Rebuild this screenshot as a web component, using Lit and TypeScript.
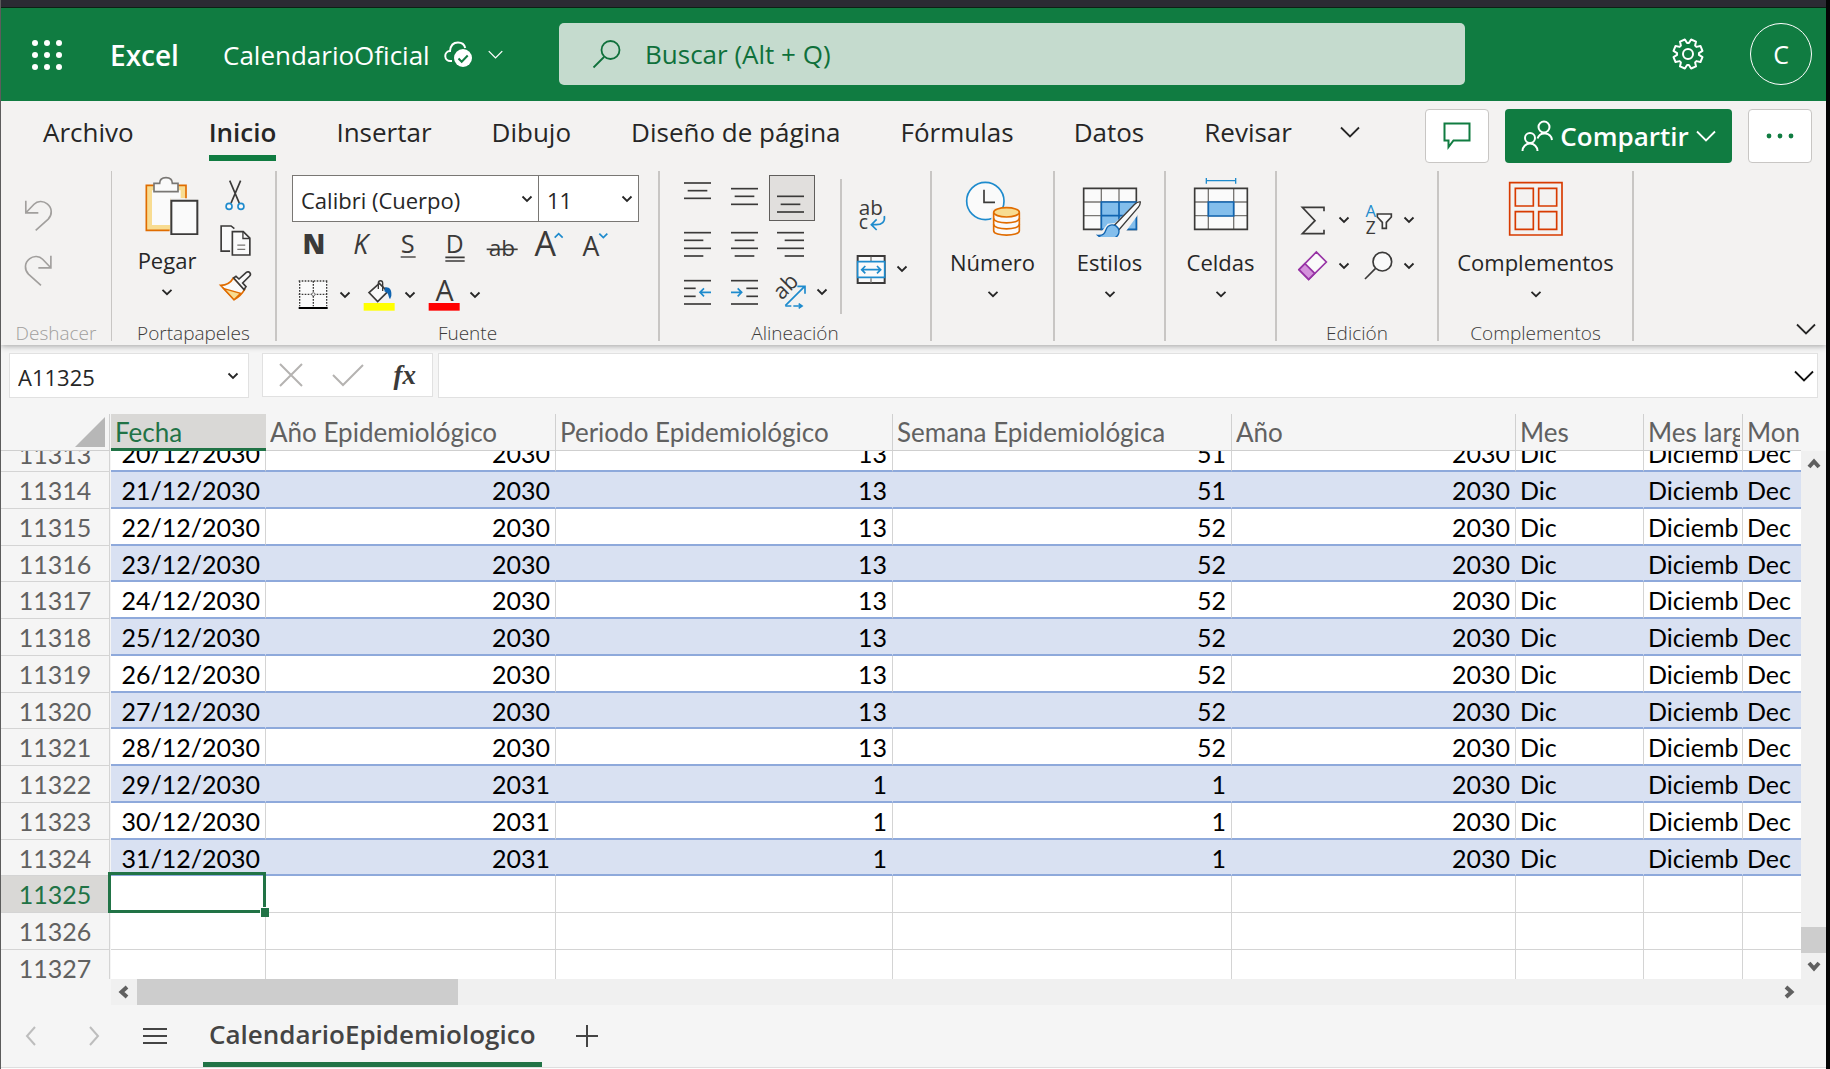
import { LitElement, html, css, svg, nothing } from "lit";
import { customElement, state } from "lit/decorators.js";
import { classMap } from "lit/directives/class-map.js";

const INK = "#3b3a39";
const BLUE = "#1e8bcd";
const PAPER = "#fafafa";

const icon = (box: string, w: number, h: number, body: unknown) =>
  html`<svg class="icon" viewBox=${box} width=${w} height=${h} aria-hidden="true">${body}</svg>`;

const smallChevron = icon("0 0 12 8", 12, 8, svg`<path d="M1.5 1.5 6 6l4.500-4.500" fill="none" stroke="#262626" stroke-width="1.800"/>`);
const bigChevron = (color: string, w = 20) =>
  icon("0 0 20 12", w, (w * 12) / 20, svg`<path d="M1 1.500 10 10.500 19 1.500" fill="none" stroke=${color} stroke-width="1.800"/>`);

const lines = (rows: Array<[number, number, number]>) =>
  svg`${rows.map(([x1, x2, y]) => svg`<path d="M${x1} ${y}H${x2}" stroke=${INK} stroke-width="5"/>`)}`;

/* ---- header ---- */
const waffle = icon("0 0 30 30", 30, 30, svg`${[3, 15, 27].map((y) => [3, 15, 27].map((x) => svg`<circle cx=${x} cy=${y} r="3" fill="#fff"/>`))}`);
const cloudSaved = icon("442 40 32 30", 32, 30, svg`
  <path d="M451 61h-1.500a5 5 0 0 1-.500-10c.500-5.500 3.700-8.500 8-8.500 4 0 6.500 2.300 7.200 5.500" fill="none" stroke="#fff" stroke-width="2"/>
  <circle cx="462" cy="58" r="9" fill="#fff"/>
  <path d="M457.500 58.500l3.200 3.200 6-6.200" fill="none" stroke="#107c41" stroke-width="2"/>`);
const lens = icon("0 0 30 30", 30, 30, svg`
  <circle cx="18.500" cy="11" r="9" fill="none" stroke="#0f703b" stroke-width="1.800"/>
  <path d="M12 18 1.500 28.500" stroke="#0f703b" stroke-width="1.800"/>`);
const gear = icon("-16 -16 32 32", 32, 32, svg`
  <path d=${gearPath()} fill="none" stroke="#fff" stroke-width="2" stroke-linejoin="round"/>
  <circle r="5" fill="none" stroke="#fff" stroke-width="2"/>`);
function gearPath() {
  const pts: string[] = [];
  const teeth = 8;
  for (let i = 0; i < teeth; i++) {
    const base = (i / teeth) * Math.PI * 2 + Math.PI / teeth;
    for (const [da, r] of [[-0.31, 11], [-0.18, 14.8], [0.18, 14.8], [0.31, 11]] as const) {
      const a = base + da;
      pts.push(`${(Math.cos(a) * r).toFixed(2)} ${(Math.sin(a) * r).toFixed(2)}`);
    }
  }
  return `M${pts.join("L")}Z`;
}
const commentIcon = icon("0 0 28 28", 28, 28, svg`<path d="M1.500 1.500h25v17H10.500l-5 6.500v-6.500h-4z" fill="none" stroke="#107c41" stroke-width="2"/>`);
const peopleIcon = icon("0 0 32 32", 32, 32, svg`<g fill="none" stroke="#fff" stroke-width="2">
  <circle cx="9" cy="18" r="5"/><path d="M1.500 31a7.500 7.500 0 0 1 15 0"/>
  <circle cx="23" cy="7" r="5.500"/><path d="M16.500 18.500a7.500 7.500 0 0 1 14.500 1.500"/></g>`);
const moreIcon = icon("0 0 28 6", 28, 6, svg`${[3, 14, 25].map((x) => svg`<circle cx=${x} cy="3" r="2.400" fill="#107c41"/>`)}`);

/* ---- ribbon: undo, clipboard ---- */
const undoIcon = icon("72 100 90 100", 30, 33, svg`<path d="M77 105v37h38M78 141l24-25c10-10 27-12 40-1 15 12 16 32 3 46l-38 34" fill="none" stroke="#a19f9d" stroke-width="5"/>`);
const redoIcon = icon("72 262 90 100", 30, 33, svg`<path d="M153 267v37h-38M152 303l-24-25c-10-10-27-12-40-1-15 12-16 32-3 46l38 34" fill="none" stroke="#a19f9d" stroke-width="5"/>`);
const pasteIcon = icon("402 30 198 180", 66, 60, svg`
  <path d="M439 61h118v38h-46v96h-72z" fill="#f8dc91"/>
  <path d="M456 76h86v24h-32v80h-54z" fill="#fafafa"/>
  <path d="M558 100V61H439v135h70" fill="none" stroke="#e06c00" stroke-width="5"/>
  <path d="M462 80V55h17c0-10 7-17 19-17s19 7 19 17h17v25z" fill="#fafafa" stroke="#797774" stroke-width="5"/>
  <path d="M514 107h78v101h-78z" fill="#fafafa" stroke=${INK} stroke-width="6"/>`);
const cutIcon = icon("658 40 96 100", 32, 33, svg`
  <path d="M690 45l29 68M723 45l-29 68" stroke=${INK} stroke-width="5"/>
  <circle cx="688" cy="123" r="9" fill="#fafafa" stroke=${BLUE} stroke-width="5"/>
  <circle cx="724" cy="123" r="9" fill="#fafafa" stroke=${BLUE} stroke-width="5"/>`);
const copyIcon = icon("654 176 105 100", 35, 33, svg`
  <path d="M690 258h-27v-76h30l10 8" fill="#fafafa" stroke=${INK} stroke-width="5"/>
  <path d="M697 199h33l20 20v51h-53z" fill="#fafafa" stroke=${INK} stroke-width="5"/>
  <path d="M729 199v21h21" fill="none" stroke=${INK} stroke-width="4"/>
  <path d="M712 240h24M712 253h24" stroke="#797774" stroke-width="4"/>`);
const painterIcon = icon("654 316 102 96", 34, 32, svg`
  <path d="M662 362c16 0 30-8 38-22l34 34c-8 14-18 24-32 31z" fill="#fafafa" stroke="#e06c00" stroke-width="5"/>
  <path d="M672 372l50 14-20 19z" fill="#f8dc91" stroke="#e06c00" stroke-width="4"/>
  <path d="M701 340l7-5 9 8 22-20c4-3 9-1 11 2s1 7-1 9l-21 21 10 11-6 9z" fill="#fafafa" stroke=${INK} stroke-width="5"/>`);

/* ---- ribbon: font ---- */
const glyph = (cx: number, body: unknown) => icon(`${cx - 60} 183 120 120`, 40, 40, body);
const boldIcon = glyph(131, svg`<text class="g" x="131" y="267" font-size="82" font-weight="800" text-anchor="middle">N</text>`);
const italicIcon = glyph(273, svg`<text class="g" x="272" y="267" font-size="80" font-style="italic" text-anchor="middle">K</text>`);
const underIcon = glyph(412, svg`<text class="g" x="411" y="265" font-size="76" text-anchor="middle">S</text><path d="M390 276h45" stroke=${INK} stroke-width="4"/>`);
const doubleIcon = glyph(554, svg`<text class="g" x="553" y="265" font-size="74" text-anchor="middle">D</text><path d="M525 277h58M525 288h58" stroke=${INK} stroke-width="5"/>`);
const strikeIcon = glyph(691, svg`<text class="g" x="691" y="272" font-size="68" text-anchor="middle">ab</text><path d="M645 253h93" stroke=${INK} stroke-width="5"/>`);
const growIcon = glyph(835, svg`<text class="g" x="824" y="272" font-size="102" text-anchor="middle">A</text><path d="M852 218l12-12 12 12" fill="none" stroke=${BLUE} stroke-width="5"/>`);
const shrinkIcon = glyph(980, svg`<text class="g" x="965" y="272" font-size="80" text-anchor="middle">A</text><path d="M990 206l12 12 12-12" fill="none" stroke=${BLUE} stroke-width="5"/>`);
const borderIcon = icon("70 330 120 120", 40, 40, svg`
  <path d="M87 346h87v80H87z" fill="#fafafa"/>
  <path d="M87 348h87M90 348v76M171 348v76M131 348v76M87 388h87" fill="none" stroke=${INK} stroke-width="4" stroke-dasharray="5 4"/>
  <circle cx="131" cy="388" r="5" fill="#fafafa" stroke=${INK} stroke-width="2"/>
  <path d="M87 429h87" stroke="#000" stroke-width="6"/>`);
const fillIcon = icon("265 330 120 120", 40, 40, svg`
  <path d="M298 383l31-28 25 25-30 30z" fill="#fafafa" stroke=${INK} stroke-width="5"/>
  <path d="M326 372v-18c0-9 13-9 13 0v24" fill="none" stroke=${INK} stroke-width="4"/>
  <path d="M346 367c14-2 21 8 19 26l-4 10c-5-8-4-14-8-19l-9-5z" fill="#1064b0"/>
  <path d="M282 414h93v23h-93z" fill="#ff0"/>`);
const colorIcon = icon("460 330 120 120", 40, 40, svg`
  <text class="g" x="525" y="408" font-size="86" text-anchor="middle">A</text>
  <path d="M477 414h93v23h-93z" fill="#f00"/>`);

/* ---- ribbon: alignment ---- */
const al = (x: number, y: number, body: unknown) => icon(`${x} ${y} 138 138`, 46, 46, body);
const topIcon = al(45, 30, lines([[72, 153, 54], [83, 142, 77], [72, 153, 100]]));
const midIcon = al(186, 30, lines([[213, 294, 71], [224, 283, 94], [213, 294, 118]]));
const botIcon = al(327, 30, lines([[351, 432, 94], [362, 421, 118], [351, 432, 141]]));
const leftIcon = al(45, 171, lines([[72, 153, 203], [72, 130, 226], [72, 153, 250], [72, 130, 273]]));
const centerIcon = al(186, 171, lines([[213, 294, 203], [224, 283, 226], [213, 294, 250], [224, 283, 273]]));
const rightIcon = al(327, 171, lines([[351, 432, 203], [374, 432, 226], [351, 432, 250], [374, 432, 273]]));
const outdentIcon = al(45, 312, svg`${lines([[72, 153, 347], [72, 107, 370], [72, 107, 394], [72, 153, 417]])}
  <path d="M153 382h-33M132 370l-12 12 12 12" fill="none" stroke=${BLUE} stroke-width="5"/>`);
const indentIcon = al(186, 312, svg`${lines([[213, 294, 347], [259, 294, 370], [259, 294, 394], [213, 294, 417]])}
  <path d="M213 382h32M233 370l12 12-12 12" fill="none" stroke=${BLUE} stroke-width="5"/>`);
const orientIcon = al(329, 312, svg`
  <text class="g" x="0" y="0" font-size="66" transform="translate(367 407) rotate(-45)">ab</text>
  <path d="M378 422l58-58M414 364h23v22" fill="none" stroke=${BLUE} stroke-width="5"/>
  <path d="M378 423h18M402 423h26M418 416l10 7-10 7" fill="none" stroke=${BLUE} stroke-width="5"/>`);
const wrapIcon = icon("572 84 138 138", 46, 46, svg`
  <text class="g" x="604" y="150" font-size="62">ab</text>
  <text class="g" x="604" y="192" font-size="58">c</text>
  <path d="M681 153c3 18-8 26-24 26h-14M658 163l-16 16 16 16" fill="none" stroke=${BLUE} stroke-width="5"/>`);
const mergeIcon = icon("565 243 138 138", 46, 46, svg`
  <path d="M594 273h81v81h-81z" fill="#fafafa" stroke=${INK} stroke-width="6"/>
  <path d="M634 275v16M634 340v14" stroke="#797774" stroke-width="4"/>
  <path d="M594 290h81v47h-81z" fill="#fafafa" stroke=${BLUE} stroke-width="5"/>
  <path d="M606 314h57M617 303l-11 11 11 11M652 303l11 11-11 11" fill="none" stroke=${BLUE} stroke-width="5"/>`);

/* ---- ribbon: large buttons ---- */
const numberIcon = icon("900 36 198 180", 66, 60, svg`
  <circle cx="976" cy="108" r="56" fill="#fafafa" stroke=${BLUE} stroke-width="5"/>
  <path d="M972 74v38h33" fill="none" stroke=${INK} stroke-width="5"/>
  <path d="M994 130h90v86h-90z" fill="#f3f2f1"/>
  <path d="M1001 143v54c0 18 77 18 77 0v-54" fill="#fafafa" stroke="#e06c00" stroke-width="5"/>
  <path d="M1001 160c0 18 77 18 77 0M1001 178c0 18 77 18 77 0" fill="none" stroke="#e06c00" stroke-width="5"/>
  <ellipse cx="1039.500" cy="142" rx="38.500" ry="14" fill="#f8dc91" stroke="#e06c00" stroke-width="5"/>`);
const stylesIcon = icon("111 36 198 180", 66, 60, svg`
  <path d="M131 70h158v123H131z" fill=${PAPER}/>
  <path d="M131 111h158M131 152h158M184 70v123M237 70v123" stroke="#797774" stroke-width="4"/>
  <path d="M131 70h158v123H131z" fill="none" stroke=${INK} stroke-width="5"/>
  <path d="M184 111h105v82H184z" fill="#83beec" stroke="#1064b0" stroke-width="5"/>
  <path d="M184 152h105M237 111v82" stroke="#1064b0" stroke-width="5"/>
  <path d="M301 102l-76 72-22 2-28 36 30 18h30l22-30 58-80z" fill="#f3f2f1"/>
  <path d="M224 180l60-62c8-8 14-8 17-7 0 4 0 10-7 17l-57 66z" fill=${PAPER} stroke=${INK} stroke-width="4"/>
  <path d="M173 211c18 1 21-6 25-17 7-18 27-18 36-5 8 15-2 28-14 31-18 5-36 1-47-9z" fill="#83beec" stroke="#1064b0" stroke-width="4"/>`);
const cellsIcon = icon("441 36 198 180", 66, 60, svg`
  <path d="M496 47h88M496 39v17M584 39v17" stroke=${BLUE} stroke-width="4"/>
  <path d="M461 70h158v123H461z" fill=${PAPER}/>
  <path d="M461 111h158M461 152h158M502 70v123M578 70v123" stroke="#797774" stroke-width="4"/>
  <path d="M461 70h158v123H461z" fill="none" stroke=${INK} stroke-width="5"/>
  <path d="M502 111h76v42h-76z" fill="#83beec" stroke="#1064b0" stroke-width="5"/>`);
const addinsIcon = icon("243 36 198 180", 66, 60, svg`<g fill="none" stroke="#d83b01" stroke-width="5">
  <path d="M263 53h157v157H263z"/><path d="M280 70h54v53h-54zM350 70h54v53h-54zM280 140h54v53h-54zM350 140h54v53h-54z"/></g>`);

/* ---- ribbon: editing ---- */
const sumIcon = icon("757 96 126 138", 42, 46, svg`<path d="M853 139v-12h-65l38 40-38 39h65v-12" fill="none" stroke=${INK} stroke-width="5"/>`);
const sortIcon = icon("952 96 126 138", 42, 46, svg`
  <text x="993" y="157" font-size="50" text-anchor="middle" fill=${BLUE}>A</text>
  <text class="g" x="993" y="206" font-size="52" text-anchor="middle">Z</text>
  <path d="M1013 147h42v9l-15 16v18h-12v-18l-15-16z" fill=${PAPER} stroke=${INK} stroke-width="5"/>`);
const eraseIcon = icon("757 234 126 138", 42, 46, svg`
  <path d="M778 314l52-53 30 30-53 53z" fill=${PAPER} stroke="#9733a5" stroke-width="5"/>
  <path d="M778 314l18-18 29 29-18 18z" fill="#d492dc" stroke="#9733a5" stroke-width="5"/>`);
const findIcon = icon("952 234 126 138", 42, 46, svg`
  <circle cx="1028" cy="290" r="28" fill=${PAPER} stroke=${INK} stroke-width="5"/>
  <path d="M1007 311l-31 31" stroke=${INK} stroke-width="5"/>`);

/* ---- formula bar and sheet bar ---- */
const cancelIcon = icon("0 0 24 24", 24, 24, svg`<path d="M1 1l22 22M23 1L1 23" stroke="#b5b3b1" stroke-width="2"/>`);
const acceptIcon = icon("0 0 32 24", 32, 24, svg`<path d="M1 12l10 10L31 2" fill="none" stroke="#b5b3b1" stroke-width="2"/>`);
const prevIcon = icon("0 0 12 20", 12, 20, svg`<path d="M10 1 2 10l8 9" fill="none" stroke="#bdbdbd" stroke-width="2"/>`);
const nextIcon = icon("0 0 12 20", 12, 20, svg`<path d="M2 1l8 9-8 9" fill="none" stroke="#bdbdbd" stroke-width="2"/>`);
const menuIcon = icon("0 0 24 18", 24, 18, svg`<path d="M0 2h24M0 9h24M0 16h24" stroke="#444" stroke-width="2"/>`);
const plusIcon = icon("0 0 22 22", 22, 22, svg`<path d="M11 0v22M0 11h22" stroke="#444" stroke-width="2"/>`);
const scrollArrow = (turn: number) =>
  icon("-8 -8 16 16", 16, 16, svg`<path d="M-5 3 0-2.500 5 3" fill="none" stroke="#606060" stroke-width="4" transform="rotate(${turn})"/>`);

const TABS = ["Archivo", "Inicio", "Insertar", "Dibujo", "Diseño de página", "Fórmulas", "Datos", "Revisar"];
const COLUMNS = ["Fecha", "Año Epidemiológico", "Periodo Epidemiológico", "Semana Epidemiológica", "Año", "Mes", "Mes largo", "Month"];
const TEXT_FROM = 5;

interface Row { id: number; cells: string[] }
const ROWS: Row[] = [
  ...Array.from({ length: 12 }, (_, i) => {
    const day = 20 + i;
    const next = day > 28;
    return {
      id: 11313 + i,
      cells: [`${day}/12/2030`, next ? "2031" : "2030", next ? "1" : "13", next ? "1" : day < 22 ? "51" : "52", "2030", "Dic", "Diciembre", "Dec"],
    };
  }),
  ...[11325, 11326, 11327].map((id) => ({ id, cells: COLUMNS.map(() => "") })),
];

@customElement("app-root")
export class AppRoot extends LitElement {
  @state() private tab = "Inicio";
  private selected = 11325;

  static styles = css`
    :host { display: block; font-family: "Open Sans", "Noto Sans", sans-serif; color: #262626; background: #050505; }
    * { box-sizing: border-box; }
    button, input, select { font: inherit; color: inherit; border: 0; padding: 0; margin: 0; background: none; }
    button { display: flex; align-items: center; justify-content: center; cursor: pointer; }
    .icon { display: block; flex: none; }
    .g { fill: #3b3a39; }
    .page { display: flex; flex-direction: column; min-height: 100vh; margin-right: 4px; border-left: 1px solid #5c5c5c; background: #fdfdfd; overflow: hidden; }
    .strip { height: 8px; background: #2b2a33; border-bottom: 1px solid #0d1f14; }

    .top { display: flex; align-items: center; height: 93px; background: #107c41; color: #fff; padding: 0 14px 2px 0; }
    .brand { display: flex; align-items: center; width: 558px; flex: none; padding: 2px 0 0 31px; }
    .brand-name { font-size: 28px; font-weight: 600; margin-left: 48px; width: 113px; }
    .doc { font-size: 26px; gap: 13px; }
    .search { flex: 1; display: flex; align-items: center; height: 62px; gap: 23px; padding-left: 33px; border-radius: 5px; background: #c5dbce; color: #0f703b; }
    .search input { flex: 1; height: 100%; font-size: 26px; outline: 0; }
    .search input::placeholder { color: #0f703b; opacity: 1; }
    .gear { width: 40px; height: 40px; margin-left: 203px; }
    .avatar { width: 62px; height: 62px; margin-left: 42px; border: 1px solid #fff; border-radius: 50%; font-size: 25px; }

    .tabs { display: flex; align-items: flex-start; height: 64px; padding: 8px 14px 0 42px; background: #f3f2f1; }
    .tab-list { display: flex; gap: 60px; padding-top: 3px; }
    .tab { height: 49px; padding-bottom: 3px; border-bottom: 6px solid transparent; font-size: 26px; line-height: 40px; white-space: nowrap; }
    .tab:first-child { margin-right: 15px; }
    .tab.on { font-weight: 600; border-color: #107c41; }
    .tab-more { height: 40px; margin-left: -12px; }
    .actions { display: flex; gap: 16px; margin-left: auto; }
    .box { width: 64px; height: 54px; background: #fff; border: 1px solid #c8c6c4; border-radius: 4px; }
    .share { height: 54px; width: 227px; gap: 7px; background: #107c41; color: #fff; border-radius: 4px; font-size: 26px; font-weight: 600; }

    .ribbon { display: flex; height: 180px; background: #f3f2f1; box-shadow: 0 1px 6px rgba(0, 0, 0, 0.35); clip-path: inset(0 0 -8px); z-index: 1; }
    .sep { flex: none; width: 2px; margin: 6px 0 4px; background: #c8c6c4; }
    .sep.thin { width: 1px; }
    .group { flex: none; display: flex; flex-direction: column; }
    .body { flex: 1; display: flex; align-items: flex-start; }
    .caption { height: 24px; line-height: 24px; font-size: 19px; font-weight: 300; text-align: center; color: #3b3a39; white-space: nowrap; }
    .dim .caption { color: #a19f9d; }
    .w110 { width: 110px; } .w163 { width: 163px; } .w381 { width: 381px; } .w270 { width: 270px; }
    .w121 { width: 121px; } .w109 { width: 109px; } .w160 { width: 160px; } .w193 { width: 193px; }
    .undo { flex-direction: column; gap: 15px; padding: 30px 0 0 23px; }
    .undo button { height: 40px; }
    .big { flex-direction: column; flex: 1; padding-top: 12px; font-size: 22px; line-height: 32px; gap: 9px; }
    .paste { flex: none; width: 78px; padding-top: 10px; }
    .clip { padding-left: 16px; gap: 9px; }
    .clip-side { display: flex; flex-direction: column; padding-top: 8px; }
    .clip-side button { width: 40px; height: 45px; }
    .font { flex-direction: column; padding: 10px 0 0 13px; }
    .combos { display: flex; margin: 0 0 4px 2px; }
    .combo { position: relative; display: block; height: 47px; border: 1px solid #797774; background: #fff; }
    .combo + .combo { margin-left: -1px; }
    .combo select { appearance: none; height: 100%; padding: 3px 24px 0 8px; font-size: 22px; outline: 0; }
    .combo .icon { position: absolute; right: 5px; top: 19px; pointer-events: none; }
    .face select { width: 245px; }
    .size select { width: 99px; }
    .row { display: flex; }
    .row.styles button { width: 47px; height: 40px; }
    .row.fills { margin: 9px 0 0 3px; }
    .split { display: flex; align-items: center; }
    .split .chev { width: 25px; height: 40px; padding-right: 2px; }
    .align { padding: 10px 0 0 15px; }
    .align-grid { display: grid; grid-template-columns: repeat(3, 46px) 12px; gap: 1px; }
    .align-grid .pressed { background: #e1dfdd; outline: 1px solid #605e5c; outline-offset: -1px; }
    .align-grid .start { grid-column: 1; }
    .inner { width: 2px; height: 135px; margin: 4px 6px 0 12px; background: #c8c6c4; }
    .wraps { display: flex; flex-direction: column; align-items: flex-start; gap: 7px; padding-top: 18px; }
    .wraps .split .chev { width: 16px; padding: 0; }
    .edit { flex-direction: column; padding: 32px 0 0 15px; }
    .edit .split .chev { width: 23px; padding-right: 4px; }
    .collapse { margin: auto 8px 4px auto; width: 24px; height: 24px; }

    .formula { display: flex; align-items: flex-start; height: 69px; padding: 8px 8px 0; background: #f5f5f5; box-shadow: 4px 0 #2d2c29; }
    .field { display: flex; align-items: center; height: 45px; background: #fff; border: 1px solid #e1e1e1; }
    .name { width: 240px; margin-right: 13px; padding-left: 8px; }
    .name input { flex: 1; min-width: 0; padding-top: 2px; font-size: 22px; outline: 0; }
    .name button { width: 30px; height: 40px; }
    .keys { width: 171px; height: 44px; margin-right: 5px; padding: 0 16px; justify-content: space-between; }
    .fx { font: italic 600 27px/30px "Liberation Serif", serif; color: #3b3a39; }
    .bar { flex: 1; }
    .bar input { flex: 1; height: 100%; padding: 0 8px; font-size: 22px; outline: 0; }
    .bar button { width: 26px; height: 40px; }

    .sheet { display: flex; background: #f5f5f5; font-family: Lato, sans-serif; }
    .grid { flex: 1; width: 100%; table-layout: fixed; border-spacing: 0; font-size: 25px; color: #000; }
    .grid th, .grid td { padding: 0; font-weight: 400; position: relative; }
    .c0 { width: 110px; } .c1 { width: 155px; } .c2 { width: 290px; } .c3 { width: 337px; } .c4 { width: 339px; }
    .c5 { width: 284px; } .c6 { width: 128px; } .c7 { width: 99px; }
    .cell { line-height: 36px; overflow: hidden; white-space: nowrap; padding: 0 5px 0 4px; display: flex; justify-content: flex-end; align-items: flex-start; }
    .cell.text { justify-content: flex-start; padding-right: 2px; }
    .value { min-width: 0; overflow: hidden; }
    thead .cell { justify-content: flex-start; color: #616161; border-right: 1px solid #d0d0d0; height: 37px; font-size: 26px; line-height: 37px; border-bottom: 1px solid #cfcfcf; padding-right: 2px; }
    thead .active .cell { color: #217346; background: #d9d8d6; border-bottom: 3px solid #217346; border-right: 0; }
    thead .corner { justify-content: flex-end; align-items: flex-end; padding: 0 4px 3px; margin-right: 1px; }
    tbody .cell { border-right: 1px solid #d4d4d4; border-bottom: 1px solid #d4d4d4; background: #fff; height: 37px; }
    tbody th .cell { justify-content: center; color: #616161; background: #f5f5f5; margin-right: 1px; padding: 0; }
    tbody td:last-child .cell, thead th:last-child .cell { border-right: 0; }
    tbody .data td .cell { border-bottom: 2px solid #8ea9db; }
    tbody .band td .cell { background: #d9e1f2; border-right-color: #d9e1f2; }
    tbody tr:nth-child(4n) .cell { height: 36px; }
    tbody tr:first-child .cell { height: 21px; align-items: flex-end; line-height: 34px; }
    tbody tr:last-child .cell { height: 29px; border-bottom: 0; }
    tbody .current th .cell { background: #d9d8d6; color: #217346; }
    .cursor { position: absolute; inset: -4px 0 0 -3px; border: 3px solid #217346; z-index: 1; }
    .cursor::after { content: ""; position: absolute; right: -6px; bottom: -7px; width: 8px; height: 9px; background: #217346; border: 1px solid #fff; border-width: 1px 0 0 1px; }
    .vscroll { display: flex; flex-direction: column; width: 25px; flex: none; margin-top: 37px; background: #f0f0f0; }
    .vscroll button, .hscroll button { width: 26px; height: 26px; flex: none; }
    .vthumb { height: 26px; margin-top: auto; background: #cdcdcd; }
    .hwrap { padding-left: 110px; background: #f5f5f5; }
    .hscroll { display: flex; height: 26px; padding-right: 24px; background: #f0f0f0; }
    .hthumb { width: 321px; margin-right: auto; background: #cdcdcd; }

    .sheets { display: flex; align-items: center; height: 63px; padding-left: 24px; background: #f5f5f5; border-bottom: 1px solid #dedede; }
    .sheets .nav { width: 12px; margin-right: 51px; }
    .sheets .all { margin-left: -8px; margin-right: 36px; }
    .sheet-tab { height: 62px; padding: 0 6px; border-bottom: 5px solid #217346; font-size: 26px; font-weight: 600; color: #444; }
    .add { margin-left: 34px; }
  `;

  private btn(label: string, content: unknown, cls = "") {
    return html`<button class=${cls} aria-label=${label} title=${label}>${content}</button>`;
  }
  private split(label: string, content: unknown) {
    return html`<div class="split">${this.btn(label, content)}${this.btn(`${label}: opciones`, smallChevron, "chev")}</div>`;
  }
  private big(label: string, content: unknown, cls = "") {
    return html`<button class="big ${cls}">${content}<span>${label}</span>${icon("0 0 12 16", 12, 16, svg`<path d="M1.500 4.800 6 9.200l4.500-4.400" fill="none" stroke="#262626" stroke-width="1.800"/>`)}</button>`;
  }
  private group(width: string, bodyCls: string, body: unknown, caption = "") {
    return html`<section class="group ${width}"><div class="body ${bodyCls}">${body}</div><div class="caption">${caption}</div></section>`;
  }

  private renderHeader() {
    return html`<header class="top">
      <div class="brand">
        ${this.btn("Iniciador de aplicaciones", waffle)}
        <span class="brand-name">Excel</span>
        <button class="doc">CalendarioOficial<span class="row">${cloudSaved}</span>${bigChevron("#fff", 15)}</button>
      </div>
      <label class="search">${lens}<input type="search" aria-label="Buscar" placeholder="Buscar (Alt + Q)" /></label>
      ${this.btn("Configuración", gear, "gear")}
      ${this.btn("Cuenta", "C", "avatar")}
    </header>`;
  }

  private renderTabs() {
    return html`<div class="tabs">
      <nav class="tab-list">
        ${TABS.map((t) => html`<button class=${classMap({ tab: true, on: t === this.tab })} @click=${() => (this.tab = t)}>${t}</button>`)}
        ${this.btn("Más pestañas", bigChevron("#262626"), "tab-more")}
      </nav>
      <div class="actions">
        ${this.btn("Comentarios", commentIcon, "box")}
        <button class="share">${peopleIcon}<span>Compartir</span>${bigChevron("#fff")}</button>
        ${this.btn("Más opciones", moreIcon, "box")}
      </div>
    </div>`;
  }

  private renderRibbon() {
    const sep = html`<span class="sep"></span>`;
    return html`<div class="ribbon">
      ${this.group("w110 dim", "undo", html`${this.btn("Deshacer", undoIcon)}${this.btn("Rehacer", redoIcon)}`, "Deshacer")}
      <span class="sep thin"></span>
      ${this.group("w163", "clip", html`${this.big("Pegar", pasteIcon, "paste")}
        <div class="clip-side">${this.btn("Cortar", cutIcon)}${this.btn("Copiar", copyIcon)}${this.btn("Copiar formato", painterIcon)}</div>`, "Portapapeles")}
      ${sep}
      ${this.group("w381", "font", html`
        <div class="combos">
          <label class="combo face"><select aria-label="Fuente"><option>Calibri (Cuerpo)</option></select>${smallChevron}</label>
          <label class="combo size"><select aria-label="Tamaño de fuente"><option>11</option></select>${smallChevron}</label>
        </div>
        <div class="row styles">
          ${this.btn("Negrita", boldIcon)}${this.btn("Cursiva", italicIcon)}${this.btn("Subrayado", underIcon)}${this.btn("Doble subrayado", doubleIcon)}
          ${this.btn("Tachado", strikeIcon)}${this.btn("Aumentar tamaño", growIcon)}${this.btn("Disminuir tamaño", shrinkIcon)}
        </div>
        <div class="row fills">${this.split("Bordes", borderIcon)}${this.split("Color de relleno", fillIcon)}${this.split("Color de fuente", colorIcon)}</div>`, "Fuente")}
      ${sep}
      ${this.group("w270", "align", html`
        <div class="align-grid">
          ${this.btn("Alinear arriba", topIcon)}${this.btn("Alinear en el medio", midIcon)}${this.btn("Alinear abajo", botIcon, "pressed")}
          ${this.btn("Alinear a la izquierda", leftIcon, "start")}${this.btn("Centrar", centerIcon)}${this.btn("Alinear a la derecha", rightIcon)}
          ${this.btn("Disminuir sangría", outdentIcon, "start")}${this.btn("Aumentar sangría", indentIcon)}${this.btn("Orientación", orientIcon)}${this.btn("Orientación: opciones", smallChevron)}
        </div>
        <span class="inner"></span>
        <div class="wraps">${this.btn("Ajustar texto", wrapIcon)}${this.split("Combinar y centrar", mergeIcon)}</div>`, "Alineación")}
      ${sep}${this.group("w121", "", this.big("Número", numberIcon))}
      ${sep}${this.group("w109", "", this.big("Estilos", stylesIcon))}
      ${sep}${this.group("w109", "", this.big("Celdas", cellsIcon))}
      ${sep}${this.group("w160", "edit", html`
        <div class="row">${this.split("Autosuma", sumIcon)}${this.split("Ordenar y filtrar", sortIcon)}</div>
        <div class="row">${this.split("Borrar", eraseIcon)}${this.split("Buscar y seleccionar", findIcon)}</div>`, "Edición")}
      ${sep}${this.group("w193", "", this.big("Complementos", addinsIcon), "Complementos")}
      ${sep}${this.btn("Contraer cinta", bigChevron("#262626"), "collapse")}
    </div>`;
  }

  private renderFormulaBar() {
    return html`<div class="formula">
      <div class="field name"><input aria-label="Cuadro de nombres" .value=${`A${this.selected}`} />${this.btn("Nombres", smallChevron)}</div>
      <div class="field keys">${this.btn("Cancelar", cancelIcon)}${this.btn("Introducir", acceptIcon)}${this.btn("Insertar función", "fx", "fx")}</div>
      <div class="field bar"><input aria-label="Barra de fórmulas" />${this.btn("Expandir", bigChevron("#111"))}</div>
    </div>`;
  }

  private renderSheet() {
    return html`<div class="sheet">
      <table class="grid">
        <colgroup>${[0, 1, 2, 3, 4, 5, 6, 7, 8].map((i) => html`<col class="c${i}" />`)}</colgroup>
        <thead><tr>
          <th><div class="cell corner">${icon("0 0 30 30", 30, 30, svg`<path d="M30 0v30H0z" fill="#b7b7b7"/>`)}</div></th>
          ${COLUMNS.map((c, i) => html`<th scope="col" class=${i === 0 ? "active" : ""}><div class="cell"><span class="value">${c}</span></div></th>`)}
        </tr></thead>
        <tbody>
          ${ROWS.map((r) => html`<tr class=${classMap({ data: r.cells[0] !== "", band: r.cells[0] !== "" && r.id % 2 === 0, current: r.id === this.selected })}>
            <th scope="row"><div class="cell">${r.id}</div></th>
            ${r.cells.map((c, i) => html`<td><div class=${classMap({ cell: true, text: i >= TEXT_FROM })}><span class="value">${c}</span></div>${r.id === this.selected && i === 0 ? html`<span class="cursor"></span>` : nothing}</td>`)}
          </tr>`)}
        </tbody>
      </table>
      <div class="vscroll">${this.btn("Subir", scrollArrow(0))}<span class="vthumb"></span>${this.btn("Bajar", scrollArrow(180))}</div>
    </div>
    <div class="hwrap"><div class="hscroll">${this.btn("Izquierda", scrollArrow(-90))}<span class="hthumb"></span>${this.btn("Derecha", scrollArrow(90))}</div></div>`;
  }

  render() {
    return html`<div class="page">
      <div class="strip"></div>
      ${this.renderHeader()}${this.renderTabs()}${this.renderRibbon()}${this.renderFormulaBar()}${this.renderSheet()}
      <footer class="sheets">
        ${this.btn("Hoja anterior", prevIcon, "nav")}${this.btn("Hoja siguiente", nextIcon, "nav")}
        ${this.btn("Todas las hojas", menuIcon, "all")}
        <button class="sheet-tab">CalendarioEpidemiologico</button>
        ${this.btn("Nueva hoja", plusIcon, "add")}
      </footer>
    </div>`;
  }
}
